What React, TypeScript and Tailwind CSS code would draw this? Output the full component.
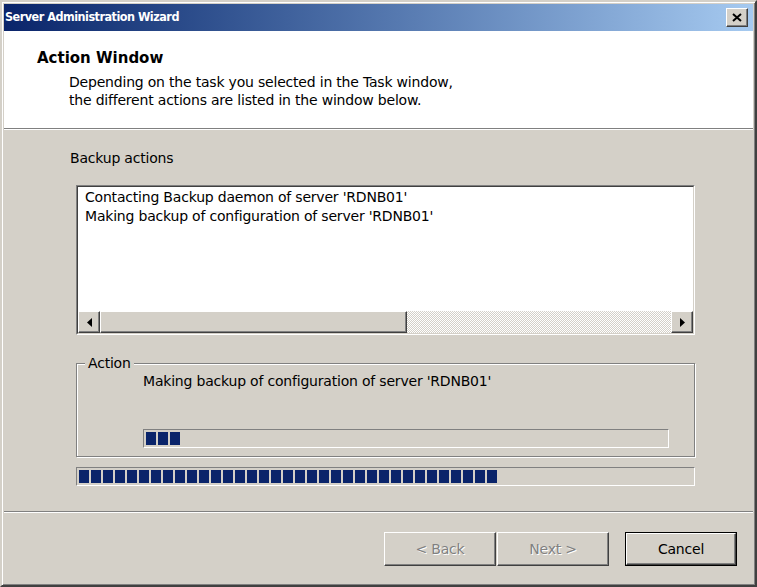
import type { ReactNode } from 'react';

const raised =
  'border border-t-white border-l-white border-r-[#404040] border-b-[#404040] shadow-[inset_-1px_-1px_0_#808080]';

function ArrowButton({ dir }: { dir: 'left' | 'right' }) {
  return (
    <div className={`w-[22px] h-full flex items-center justify-center bg-[#d4d0c8] ${raised}`}>
      <svg width="5" height="9" viewBox="0 0 5 9">
        {dir === 'left' ? (
          <polygon points="5,0 0,4.5 5,9" fill="#000" />
        ) : (
          <polygon points="0,0 5,4.5 0,9" fill="#000" />
        )}
      </svg>
    </div>
  );
}

function Progress({ blocks, className }: { blocks: number; className: string }) {
  return (
    <div
      className={`border border-t-[#808080] border-l-[#808080] border-b-white border-r-white flex items-stretch gap-[2px] p-[2px] ${className}`}
    >
      {Array.from({ length: blocks }).map((_, i) => (
        <div key={i} className="w-[10px] bg-[#0a246a]" />
      ))}
    </div>
  );
}

function WinButton({
  children,
  disabled,
  isDefault,
}: {
  children: ReactNode;
  disabled?: boolean;
  isDefault?: boolean;
}) {
  const inner = (
    <div
      className={`w-full h-full flex items-center justify-center bg-[#d4d0c8] ${raised} ${
        disabled ? 'text-[#808080] [text-shadow:1px_1px_0_#fff]' : 'text-black'
      }`}
    >
      {children}
    </div>
  );
  if (isDefault) {
    return <div className="w-[112px] h-[34px] border border-black">{inner}</div>;
  }
  return <div className="w-[112px] h-[34px]">{inner}</div>;
}

export default function App() {
  return (
    <div
      className="w-[757px] h-[587px] bg-[#d4d0c8] flex flex-col border-2 border-t-[#d4d0c8] border-l-[#d4d0c8] border-r-[#404040] border-b-[#404040] shadow-[inset_1px_1px_0_#fff,inset_-1px_-1px_0_#808080] p-[2px] text-[14px] tracking-[-0.2px] text-black"
      style={{ fontFamily: '"DejaVu Sans", Verdana, sans-serif' }}
    >
      {/* title bar */}
      <div className="h-[27px] flex items-center justify-between pl-[1px] pr-[5px] bg-gradient-to-r from-[#0a246a] to-[#a6caf0]">
        <span
          className="text-white font-bold text-[12.5px] tracking-[-0.5px]"
          style={{ fontFamily: '"DejaVu Sans Condensed", "DejaVu Sans", sans-serif' }}
        >
          Server Administration Wizard
        </span>
        <div className={`w-[22px] h-[19px] flex items-center justify-center bg-[#d4d0c8] ${raised}`}>
          <svg width="10" height="9" viewBox="0 0 10 9">
            <path d="M1 1 L9 8 M9 1 L1 8" stroke="#000" strokeWidth="2" />
          </svg>
        </div>
      </div>

      {/* header */}
      <div className="h-[97px] bg-white pt-[18px] pl-[33px] leading-[18px]">
        <div className="font-bold text-[15px] tracking-normal">Action Window</div>
        <div className="pl-[32px] mt-[6px]">
          <div>Depending on the task you selected in the Task window,</div>
          <div>the different actions are listed in the window below.</div>
        </div>
      </div>
      <div className="h-[2px] border-t border-t-[#808080] border-b border-b-white" />

      {/* body */}
      <div className="flex-1 flex flex-col">
        <div className="pl-[66px] mt-[19px] leading-[18px]">Backup actions</div>

        <div className="ml-[72px] mt-[18px] w-[619px] h-[150px] flex flex-col border border-t-[#808080] border-l-[#808080] border-b-white border-r-white bg-white">
          <div className="flex-1 flex flex-col border border-t-[#404040] border-l-[#404040] border-b-[#d4d0c8] border-r-[#d4d0c8]">
            <div className="flex-1 pl-[7px] pt-[1px] leading-[19px]">
              <div>Contacting Backup daemon of server 'RDNB01'</div>
              <div>Making backup of configuration of server 'RDNB01'</div>
            </div>
            <div className="h-[22px] flex">
              <ArrowButton dir="left" />
              <div className={`w-[307px] h-full bg-[#d4d0c8] ${raised}`} />
              <div className="flex-1 h-full [background-image:repeating-conic-gradient(#d4d0c8_0%_25%,#ffffff_0%_50%)] [background-size:2px_2px]" />
              <ArrowButton dir="right" />
            </div>
          </div>
        </div>

        <div className="relative ml-[72px] mt-[28px] w-[619px] h-[94px] border border-[#808080] shadow-[inset_1px_1px_0_#fff,1px_1px_0_#fff] flex flex-col">
          <span className="absolute -top-[10px] left-[8px] px-[3px] bg-[#d4d0c8] leading-[18px]">Action</span>
          <div className="pl-[66px] mt-[8px] leading-[18px]">Making backup of configuration of server 'RDNB01'</div>
          <Progress blocks={3} className="ml-[66px] mt-[39px] w-[526px] h-[19px]" />
        </div>

        <Progress blocks={35} className="ml-[72px] mt-[10px] w-[619px] h-[19px]" />

        <div className="flex-1" />
        <div className="h-[2px] border-t border-t-[#808080] border-b border-b-white" />
        <div className="h-[70px] flex items-start justify-end pt-[19px] pr-[16px]">
          <WinButton disabled>&lt; Back</WinButton>
          <div className="w-[1px]" />
          <WinButton disabled>Next &gt;</WinButton>
          <div className="w-[16px]" />
          <WinButton isDefault>Cancel</WinButton>
        </div>
      </div>
    </div>
  );
}
